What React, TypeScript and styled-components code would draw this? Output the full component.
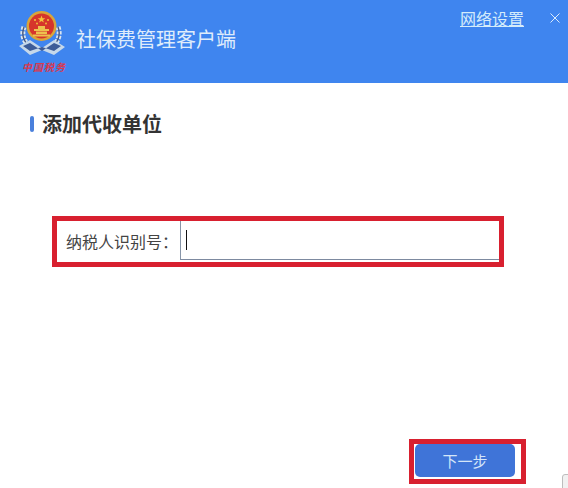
import React from "react";
import styled, { createGlobalStyle } from "styled-components";

const Global = createGlobalStyle`
  html, body { margin: 0; padding: 0; background: #fff; }
  body { font-family: "Liberation Sans", "Noto Sans CJK SC", sans-serif; }
`;
const Page = styled.div`
  width: 568px; height: 488px; display: flex; flex-direction: column; overflow: hidden; background: #fff; position: relative;
`;
const Header = styled.header`
  height: 83px; flex: none; background: #3f85ef; display: flex; align-items: flex-start; color: #e6f0fc;
`;
const Brand = styled.div`
  display: flex; flex-direction: column; align-items: center; width: 48px; margin: 8px 0 0 18px;
`;
const Motto = styled.span`
  font-family: "Noto Sans CJK SC", sans-serif; font-size: 10px; line-height: 12px; font-weight: 700; font-style: italic;
  color: #d8394f; white-space: nowrap; letter-spacing: 1px; margin: 3px 0 0 4px;
`;
const AppName = styled.h1`
  margin: 24px 0 0 10px; font: 400 20px/30px "Noto Sans CJK SC", sans-serif; color: #dfecfb; flex: 1;
`;
const NetLink = styled.a`
  margin: 7px 0 0; font: 400 16px/22px "Noto Sans CJK SC", sans-serif; color: #d4ecfb; text-decoration: underline;
`;
const Close = styled.svg`
  margin: 13px 8px 0 26px; flex: none;
`;
const Section = styled.div`
  display: flex; align-items: center; gap: 8px; margin: 26px 0 0 30px; height: 30px;
`;
const Bar = styled.i`
  width: 4px; height: 16px; border-radius: 2px; background: #4a80dc; display: block;
`;
const SectionTitle = styled.h2`
  margin: 0; font: 700 20px/30px "Noto Sans CJK SC", sans-serif; color: #333;
`;
const Highlight = styled.div`
  border: 5px solid #d8202f; box-sizing: border-box; background: #fff;
`;
const FormBox = styled(Highlight)`
  width: 452px; height: 51px; margin: 77px 0 0 52px; display: flex; align-items: flex-start;
`;
const Label = styled.label`
  width: 123px; flex: none; padding: 0 0 0 9px; box-sizing: border-box;
  font: 400 16px/40px "Noto Sans CJK SC", sans-serif; color: #444; white-space: nowrap;
`;
const Field = styled.div`
  flex: 1; height: 39px; box-sizing: border-box; border-left: 1px solid #8795a8; border-bottom: 1px solid #7d8aa0;
  display: flex; align-items: center; padding-left: 5px;
`;
const Caret = styled.i`
  width: 1px; height: 20px; background: #111; display: block;
`;
const Footer = styled.div`
  flex: 1; display: flex; align-items: flex-start; padding: 172px 0 0 409px;
`;
const ButtonBox = styled(Highlight)`
  width: 117px; height: 45px; padding: 0 0 0 1px; display: flex; align-items: flex-start;
`;
const NextButton = styled.button`
  width: 100px; height: 33px; border: 0; border-radius: 5px; background: #3f74d8; color: #d5e6f8; padding: 0;
  font: 400 15px/33px "Noto Sans CJK SC", sans-serif;
`;
const Corner = styled.span`
  position: absolute; left: 562px; top: 474px; width: 12px; height: 20px; box-sizing: border-box;
  border: 1px solid #bdbdbd; border-radius: 3px; background: #f1f1f1;
`;

const Emblem = () => (
  <svg width="48" height="50" viewBox="0 0 48 50" aria-hidden="true">
    <path d="M6 19c-3 8 0 16 7 20M40 19c3 8 0 16-7 20" fill="none" stroke="#dbe5ee" strokeWidth="5" strokeDasharray="3 1.4" />
    <path d="M6 19c-3 8 0 16 7 20M40 19c3 8 0 16-7 20" fill="none" stroke="#47587f" strokeWidth="1.4" />
    <path d="M1 38 12 32l12 8 12-8 11 7-11 8-12-5-12 5z" fill="#c6d8ea" />
    <path d="M5 38l7-3 12 8 12-8 7 3-7 5-12-4-12 4z" fill="#3d5c98" />
    <circle cx="23.5" cy="18" r="15" fill="#d9a53a" />
    <circle cx="23.5" cy="18" r="12.5" fill="#d6352b" />
    <path d="M23.5 7.5l1 2.7h2.8l-2.3 1.7.9 2.7-2.4-1.7-2.4 1.7.9-2.7-2.3-1.7h2.8z" fill="#f2c53d" />
    <circle cx="17" cy="12" r="1" fill="#f2c53d" />
    <circle cx="30" cy="12" r="1" fill="#f2c53d" />
    <circle cx="19" cy="15.5" r=".9" fill="#f2c53d" />
    <circle cx="28" cy="15.5" r=".9" fill="#f2c53d" />
    <path d="M16 21h15v2H16zM18 23.5h11V26H18zM15 26.5h17V28.5H15zM20 18h7v3h-7z" fill="#edc14e" />
  </svg>
);

export default function App() {
  return (
    <Page>
      <Global />
      <Header>
        <Brand>
          <Emblem />
          <Motto>中国税务</Motto>
        </Brand>
        <AppName>社保费管理客户端</AppName>
        <NetLink href="#">网络设置</NetLink>
        <Close width="10" height="10" viewBox="0 0 10 10" aria-hidden="true">
          <path d="M.5.5l9 9M9.5.5l-9 9" stroke="#dcebfb" strokeWidth="1" fill="none" />
        </Close>
      </Header>
      <Section>
        <Bar />
        <SectionTitle>添加代收单位</SectionTitle>
      </Section>
      <FormBox>
        <Label>纳税人识别号：</Label>
        <Field><Caret /></Field>
      </FormBox>
      <Footer>
        <ButtonBox>
          <NextButton>下一步</NextButton>
        </ButtonBox>
      </Footer>
      <Corner />
    </Page>
  );
}
